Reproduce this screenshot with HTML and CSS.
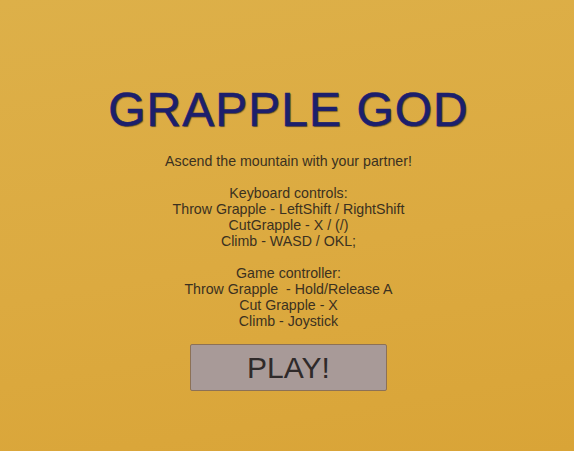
FILE: index.html
```html
<!DOCTYPE html>
<html lang="en">
<head>
  <meta charset="UTF-8">
  <meta name="viewport" content="width=device-width, initial-scale=1.0">
  <title>Grapple God</title>
  <link rel="stylesheet" href="styles.css">
</head>
<body>
  <div class="menu">
    <h1 class="title">GRAPPLE GOD</h1>

    <div class="info">
      <p>Ascend the mountain with your partner!</p>

      <p>
        Keyboard controls:<br>
        Throw Grapple - LeftShift / RightShift<br>
        CutGrapple - X / (/)<br>
        Climb - WASD / OKL;
      </p>

      <p>
        Game controller:<br>
        Throw Grapple &nbsp;- Hold/Release A<br>
        Cut Grapple - X<br>
        Climb - Joystick
      </p>
    </div>

    <button type="button" class="play">PLAY!</button>
  </div>
</body>
</html>
```

FILE: styles.css
```css
body {
  margin: 0;
  height: 451px;
  font-family: "Liberation Sans", Arial, sans-serif;
  background: linear-gradient(170deg, #ddb049 0%, #dcaa40 55%, #d9a437 100%);
  overflow: hidden;
}

.menu {
  display: flex;
  flex-direction: column;
  align-items: center;
  padding-top: 86px;
  padding-left: 3px;
}

.title {
  margin: 0;
  font-size: 48px;
  line-height: 48px;
  font-weight: normal;
  letter-spacing: 1px;
  color: #1c1f6c;
  -webkit-text-stroke: 0.6px #1c1f6c;
  text-shadow: 1px 1px 1px rgba(20, 15, 10, 0.55);
}

.info {
  margin-top: 19px;
  text-align: center;
  font-size: 14.2px;
  line-height: 16px;
  color: #3b3120;
}

.info p {
  margin: 0 0 16px;
}

.info p:last-child {
  margin-bottom: 0;
}

.play {
  margin-top: 15px;
  width: 197px;
  height: 47px;
  padding: 0;
  border: 1px solid #8c7156;
  border-radius: 2px;
  background-color: #a89a98;
  font-family: "Liberation Sans", Arial, sans-serif;
  font-size: 30px;
  color: #2f2a2a;
  cursor: pointer;
}
```
